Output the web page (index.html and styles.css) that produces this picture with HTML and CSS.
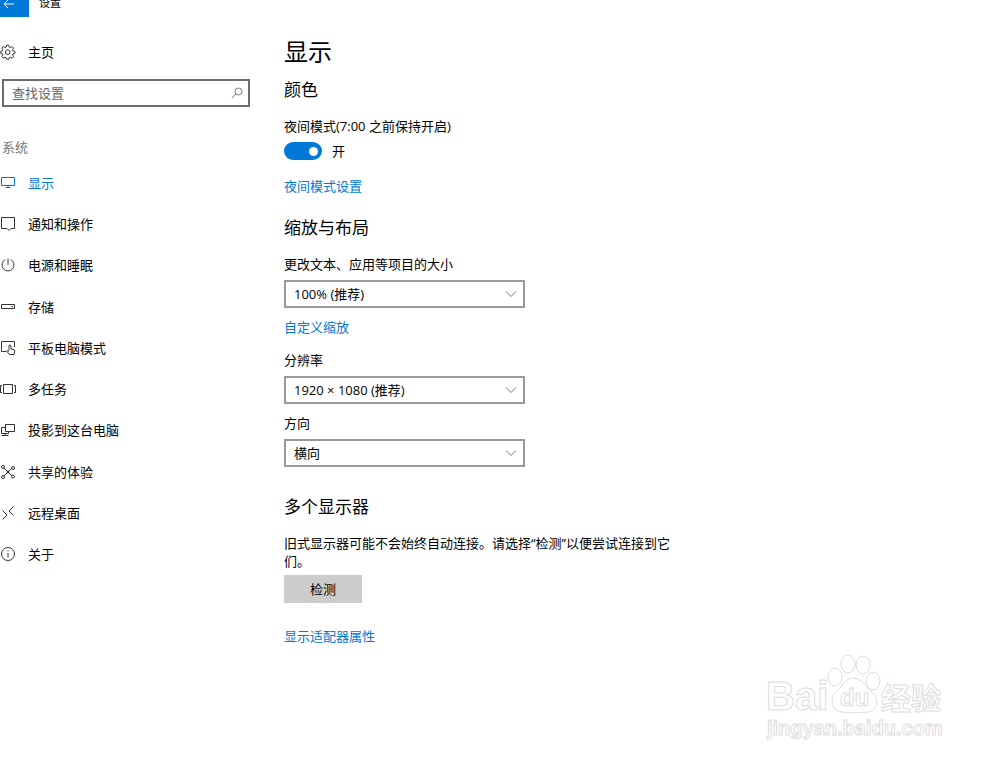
FILE: index.html
```
<!DOCTYPE html>
<html lang="zh-CN">
  <head>
    <meta charset="utf-8">
    <title>设置</title>
    <link rel="stylesheet" href="styles.css">
  </head>

  <body>
    <header class="titlebar">
      <button class="back" type="button" aria-label="返回">
        <svg width="14" height="12" viewBox="0 0 14 12"><path d="M13 7H3M7 3L3 7l4 4" /></svg>
      </button>
      <span class="app-name">设置</span>
    </header>

    <div class="layout">
      <aside class="sidebar">
        <a class="item home" href="#">
          <svg class="icon" viewBox="0 0 16 16">
            <path d="M6.6 1.2h2.2l.4 1.9 1.1.5 1.7-1.1 1.6 1.6-1.1 1.7.5 1.1 1.9.4v2.2l-1.9.4-.5 1.1 1.1 1.7-1.6 1.6-1.7-1.1-1.1.5-.4 1.5H6.6l-.4-1.5-1.1-.5-1.7 1.1-1.6-1.6 1.1-1.7-.5-1.1L.8 9.5V7.3l1.6-.4.5-1.1-1.1-1.7 1.6-1.6 1.7 1.1 1.1-.5z" />
            <circle cx="7.7" cy="8.2" r="2.3" />
          </svg>
          <span>主页</span>
        </a>

        <form class="search">
          <input type="text" placeholder="查找设置" aria-label="查找设置">
          <svg width="12" height="12" viewBox="0 0 12 12"><circle cx="7.5" cy="4.5" r="3.5" /><path d="M5 7L.8 11.2" /></svg>
        </form>

        <p class="group">系统</p>
        <nav class="menu">
          <a class="item active" href="#">
            <svg class="icon" viewBox="0 0 16 16"><path d="M1.5 2.5h13v8h-13zM8 10.500v2M5.5 12.500h5" /></svg>
            <span>显示</span>
          </a>
          <a class="item" href="#">
            <svg class="icon" viewBox="0 0 16 16"><path d="M1.5 1.5h13v11H11l-2 2-2-2H1.5z" /></svg>
            <span>通知和操作</span>
          </a>
          <a class="item" href="#">
            <svg class="icon" viewBox="0 0 16 16"><path d="M8 1.5V8M5.3 2.6a6 6 0 1 0 5.4 0" /></svg>
            <span>电源和睡眠</span>
          </a>
          <a class="item" href="#">
            <svg class="icon" viewBox="0 0 16 16"><path d="M1.5 5.500h13v4h-13zM11.5 7.500h1.500" /></svg>
            <span>存储</span>
          </a>
          <a class="item" href="#">
            <svg class="icon" viewBox="0 0 16 16"><path d="M6 11.5H1.5v-10h13V7M9 10.500V5.500q1-1 2 0V9l3 .6q1 .4.8 1.500L14 14.500H9.500L6.500 11q.8-1.300 2.500.5" /></svg>
            <span>平板电脑模式</span>
          </a>
          <a class="item" href="#">
            <svg class="icon" viewBox="0 0 16 16"><path d="M3.5 3.5h9v9h-9zM2 4.5H.5v7H2M14 4.5h1.5v7H14" /></svg>
            <span>多任务</span>
          </a>
          <a class="item" href="#">
            <svg class="icon" viewBox="0 0 16 16"><path d="M5.5 2.5h9v7h-9zM5.5 5.5h-4v6h7v-2M5 11.5v2M1.500 13.500h7" /></svg>
            <span>投影到这台电脑</span>
          </a>
          <a class="item" href="#">
            <svg class="icon" viewBox="0 0 16 16">
              <path d="M4 4l8 8M12 4l-8 8" />
              <circle cx="3" cy="3" r="1.5" /><circle cx="13" cy="4" r="1.5" /><circle cx="3" cy="13" r="1.5" /><circle cx="13" cy="12.5" r="1.5" /><circle class="dot" cx="8" cy="8" r="1" />
            </svg>
            <span>共享的体验</span>
          </a>
          <a class="item" href="#">
            <svg class="icon" viewBox="0 0 16 16"><path d="M2.5 5.5L7 10l-4.5 4.5M13.5 1.5L9 6l4.500 4.500" /></svg>
            <span>远程桌面</span>
          </a>
          <a class="item" href="#">
            <svg class="icon" viewBox="0 0 16 16"><circle cx="8" cy="8" r="6.5" /><path d="M8 7v4.5M8 4.5v1" /></svg>
            <span>关于</span>
          </a>
        </nav>
      </aside>

      <main class="content">
        <h1>显示</h1>

        <section class="color">
          <h2>颜色</h2>
          <label for="night">夜间模式(7:00 之前保持开启)</label>
          <div class="toggle">
            <input type="checkbox" id="night" checked>
            <span>开</span>
          </div>
          <a class="link" href="#">夜间模式设置</a>
        </section>

        <section class="scale">
          <h2>缩放与布局</h2>
          <label for="size">更改文本、应用等项目的大小</label>
          <div class="select">
            <select id="size">
              <option>100% (推荐)</option>
              <option>125%</option>
            </select>
            <svg width="12" height="8" viewBox="0 0 12 8"><path d="M1 1.5l5 5 5-5" /></svg>
          </div>
          <a class="link" href="#">自定义缩放</a>
          <label for="resolution">分辨率</label>
          <div class="select">
            <select id="resolution">
              <option>1920 × 1080 (推荐)</option>
              <option>1280 × 720</option>
            </select>
            <svg width="12" height="8" viewBox="0 0 12 8"><path d="M1 1.5l5 5 5-5" /></svg>
          </div>
          <label for="direction">方向</label>
          <div class="select">
            <select id="direction">
              <option>横向</option>
              <option>纵向</option>
            </select>
            <svg width="12" height="8" viewBox="0 0 12 8"><path d="M1 1.5l5 5 5-5" /></svg>
          </div>
        </section>

        <section class="displays">
          <h2>多个显示器</h2>
          <p>旧式显示器可能不会始终自动连接。请选择“检测”以便尝试连接到它们。</p>
          <button class="detect" type="button">检测</button>
          <a class="link" href="#">显示适配器属性</a>
        </section>
      </main>
    </div>

    <svg class="watermark" width="190" height="92" viewBox="0 0 190 92">
      <text class="brand" x="1" y="57">Bai</text>
      <text class="exp" x="116" y="56">经验</text>
      <g class="paw">
        <ellipse cx="70" cy="24" rx="7" ry="9" />
        <ellipse cx="83" cy="11" rx="7" ry="9" />
        <ellipse cx="98" cy="12" rx="7" ry="9" />
        <ellipse cx="108" cy="28" rx="7" ry="9" />
        <path d="M88 25c-8 0-10 8-16 13-8 7-6 19 4 21 7 1 20 1 27 0 10-2 12-12 4-20-6-5-10-14-19-14z" />
      </g>
      <text class="du" x="75" y="53">du</text>
      <text class="site" x="2" y="82">jingyan.baidu.com</text>
    </svg>
  </body>
</html>
```
FILE: styles.css
```
* {
  box-sizing: border-box;
}

body {
  display: flow-root;
  margin: 0;
  min-height: 100vh;
  position: relative;
  background-color: #fff;
  color: #000;
  font-family: "Open Sans", "Noto Sans CJK SC", sans-serif;
  font-size: 13px;
  line-height: 18px;
}

h1,
h2,
p {
  margin: 0;
  font-weight: normal;
}

a {
  color: inherit;
  text-decoration: none;
}

svg {
  fill: none;
  stroke: currentColor;
}

input,
select,
button {
  font: inherit;
  color: inherit;
}

/* Title bar, partly scrolled out of the window */
.titlebar {
  display: flex;
  align-items: center;
  gap: 10px;
  height: 28px;
  margin-top: -11px;
  font-size: 11px;
}

.back {
  display: flex;
  align-items: center;
  width: 29px;
  height: 28px;
  padding: 0 1px;
  border: none;
  background-color: #0078d7;
  color: #fff;
}

.layout {
  display: flex;
  gap: 34px;
}

/* Sidebar */
.sidebar {
  flex: 0 0 250px;
  padding-top: 14px;
}

.item {
  display: flex;
  align-items: center;
  gap: 12px;
}

.home {
  height: 42px;
}

.icon {
  width: 16px;
  height: 16px;
  color: #333;
}

.dot {
  fill: #333;
}

.search {
  position: relative;
  margin: 6px 0 31px 2px;
}

.search input {
  display: block;
  width: 100%;
  height: 28px;
  padding: 0 30px 0 8px;
  border: 2px solid #6c6c6c;
  outline: none;
}

.search input::placeholder {
  color: #666;
  opacity: 1;
}

.search svg {
  position: absolute;
  right: 7px;
  top: 8px;
  color: #777;
}

.group {
  padding-left: 2px;
  margin-bottom: 6px;
  color: #777;
}

.menu {
  display: grid;
  grid-auto-rows: 1fr;
  min-height: 413px;
}

.active,
.active .icon {
  color: #0078d7;
}

/* Settings */
.content {
  flex: 1;
  max-width: 390px;
  padding-top: 19px;
}

h1 {
  font-size: 24px;
  line-height: 32px;
}

h2 {
  margin-bottom: 15px;
  font-size: 17px;
  line-height: 24px;
}

label,
.link {
  display: block;
}

.link {
  color: #0078d7;
}

.color {
  margin-top: 10px;
}

.toggle {
  display: flex;
  align-items: center;
  gap: 10px;
  margin: 7px 0 17px;
}

.toggle input {
  appearance: none;
  display: flex;
  align-items: center;
  justify-content: flex-end;
  width: 38px;
  height: 18px;
  margin: 0;
  padding-right: 4px;
  border-radius: 9px;
  background-color: #0078d7;
}

.toggle input::before {
  content: "";
  width: 9px;
  height: 9px;
  border-radius: 50%;
  background-color: #fff;
}

.scale {
  margin-top: 21px;
}

.select {
  position: relative;
  width: 241px;
  margin: 7px 0 10px;
}

.select select {
  appearance: none;
  display: block;
  width: 100%;
  height: 28px;
  padding: 0 30px 0 8px;
  border: 2px solid #999;
  border-radius: 0;
  background-color: #fff;
}

.select svg {
  position: absolute;
  right: 8px;
  top: 10px;
  color: #777;
  pointer-events: none;
}

.scale .link {
  margin-bottom: 15px;
}

.displays {
  margin-top: 28px;
}

.detect {
  display: block;
  width: 78px;
  height: 28px;
  margin: 5px 0 24px;
  border: none;
  background-color: #ccc;
}

/* Watermark */
.watermark {
  position: absolute;
  right: 45px;
  bottom: 17px;
  stroke: #ddd;
  fill: #fff;
  pointer-events: none;
}

.watermark text {
  font-family: "Liberation Sans", "Noto Sans CJK SC", sans-serif;
  font-weight: bold;
}

.brand {
  font-size: 40px;
}

.du {
  font-size: 24px;
}

.exp {
  font-size: 30px;
}

.site {
  font-size: 20px;
}
```
